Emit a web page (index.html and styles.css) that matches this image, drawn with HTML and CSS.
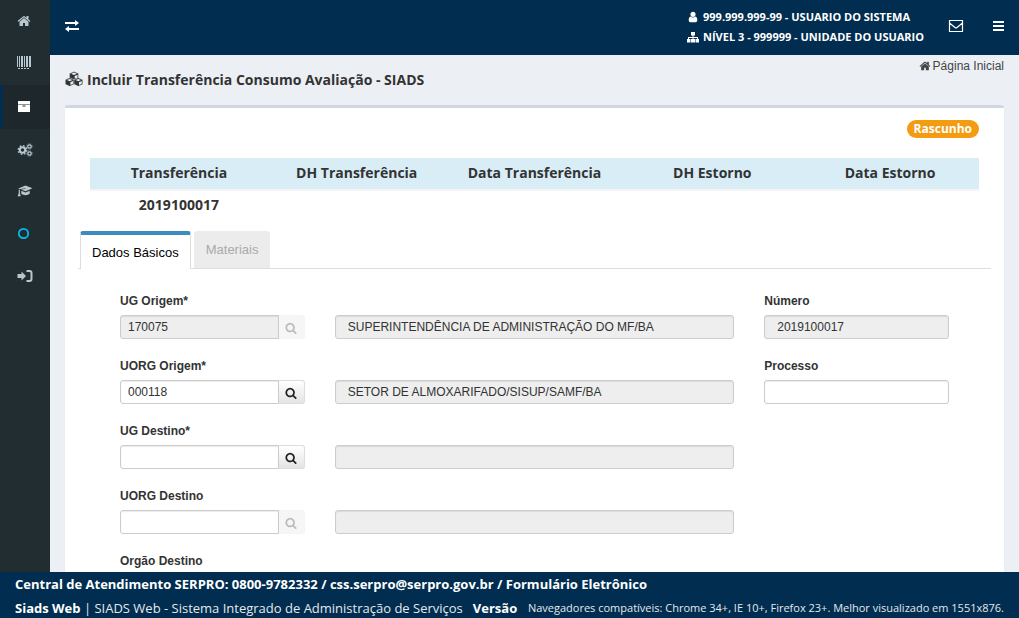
FILE: index.html
```html
<!DOCTYPE html>
<html lang="pt-BR">

<head>
    <meta charset="UTF-8">
    <meta name="viewport" content="width=device-width, initial-scale=1.0">
    <title>Incluir Transferência Consumo Avaliação - SIADS</title>
    <link rel="stylesheet" href="styles.css">
</head>

<body>

    <!-- Shared icons -->
    <svg class="sprite" aria-hidden="true">
        <symbol id="icon-home" viewBox="0 0 1792 1792">
            <path d="M1472 992v480q0 26-19 45t-45 19h-384v-384h-256v384h-384q-26 0-45-19t-19-45v-480q0-1 .5-3t.5-3l575-474 575 474q1 2 1 6zm223-69l-62 74q-8 9-21 11h-3q-13 0-21-7l-692-577-692 577q-12 8-24 7-13-2-21-11l-62-74q-8-10-7-23.5t11-21.5l719-599q32-26 76-26t76 26l244 204v-195q0-14 9-23t23-9h192q14 0 23 9t9 23v408l219 182q10 8 11 21.5t-7 23.5z"/>
        </symbol>
        <symbol id="icon-search" viewBox="0 0 1792 1792">
            <path d="M1216 832q0-185-131.5-316.5t-316.5-131.5-316.5 131.5-131.5 316.5 131.5 316.5 316.5 131.5 316.5-131.5 131.5-316.5zm512 832q0 52-38 90t-90 38q-54 0-90-38l-343-342q-179 124-399 124-143 0-273.5-55.5t-225-150-150-225-55.5-273.5 55.5-273.5 150-225 225-150 273.5-55.5 273.5 55.5 225 150 150 225 55.5 273.5q0 220-124 399l343 343q37 37 37 90z"/>
        </symbol>
    </svg>

    <div class="wrapper">
        <nav class="sidebar" aria-label="Menu principal">
            <a href="#" aria-label="Início"><svg class="icon"><use href="#icon-home"/></svg></a>
            <a href="#" class="tall" aria-label="Patrimônio">
                <svg class="icon" viewBox="0 0 14 14">
                    <path d="M0 0h1v11H0zM2 0h1v11H2zM4 0h2v11H4zM7 0h1v11H7zM9 0h2v11H9zM12 0h2v11h-2zM1 12h2v1H1zM4 12h2v1H4zM7 12h2v1H7zM10 12h2v1h-2z"/>
                </svg>
            </a>
            <a href="#" class="tall active" aria-label="Almoxarifado">
                <svg class="icon" viewBox="0 0 14 14">
                    <path d="M1 1h12v3H1zM1 4.500h12V12H1zM5.500 5.500v1h3v-1z" fill-rule="evenodd"/>
                </svg>
            </a>
            <a href="#" aria-label="Configurações">
                <svg class="icon wide" viewBox="0 0 15 14">
                    <g fill="none" stroke="currentColor">
                        <circle cx="5" cy="7" r="2.700" stroke-width="2"/>
                        <circle cx="5" cy="7" r="4.300" stroke-width="1.300" stroke-dasharray="1.700 1.677"/>
                        <circle cx="12" cy="3.500" r="1.700" stroke-width="1.200"/>
                        <circle cx="12" cy="3.500" r="2.600" stroke-width=".8" stroke-dasharray="1.100 .94"/>
                        <circle cx="12" cy="10.500" r="1.700" stroke-width="1.200"/>
                        <circle cx="12" cy="10.500" r="2.600" stroke-width=".8" stroke-dasharray="1.100 .94"/>
                    </g>
                </svg>
            </a>
            <a href="#" aria-label="Treinamento">
                <svg class="icon wide" viewBox="0 0 15 14">
                    <path d="M8 1.500l7 2.700-7 3-4.500-1.700 4.500-.7-.2-.6-6 1.100-1-.7zM3.800 6.700L8 8.400l4.200-1.700v3c-2 1.900-6.400 1.900-8.400 0zM1.200 5.700l1.200.4v3.200l.9 2.900H.1l1.100-2.900z"/>
                </svg>
            </a>
            <a href="#" class="tall info" aria-label="Ajuda">
                <svg class="icon" viewBox="0 0 14 14">
                    <circle cx="6.500" cy="7.500" r="4.700" fill="none" stroke="currentColor" stroke-width="1.700"/>
                </svg>
            </a>
            <a href="#" aria-label="Sair">
                <svg class="icon wide" viewBox="0 0 15 14">
                    <path d="M0 5h4V2.500L8.500 7 4 11.500V9H0z"/>
                    <path d="M9 2h3q2 0 2 2v6q0 2-2 2H9" fill="none" stroke="currentColor" stroke-width="2"/>
                </svg>
            </a>
        </nav>

        <div class="page">
            <header class="topbar">
                <button type="button" class="icon-button" aria-label="Alternar menu">
                    <svg class="icon wide" viewBox="0 0 16 14">
                        <path d="M1 3h10V1l4 3-4 3V5H1zM15 9H5V7l-4 3 4 3v-2h10z"/>
                    </svg>
                </button>
                <div class="user-info">
                    <div>
                        <svg class="icon-user" viewBox="0 0 1792 1792">
                            <path d="M1536 1399q0 109-62.500 187t-150.500 78h-854q-88 0-150.500-78t-62.500-187q0-85 8.500-160.500t31.500-152 58.500-131 94-89 134.500-34.500q131 128 313 128t313-128q76 0 134.500 34.500t94 89 58.500 131 31.500 152 8.500 160.500zm-256-887q0 159-112.500 271.500t-271.500 112.500-271.500-112.500-112.500-271.500 112.500-271.500 271.500-112.500 271.500 112.500 112.500 271.500z"/>
                        </svg>
                        <span>999.999.999-99 - USUARIO DO SISTEMA</span>
                    </div>
                    <div>
                        <svg class="icon-user" viewBox="0 0 12 12">
                            <path d="M4 1h4v3.500H6.500V6H11v2h1v3.500H8.500V8H10V7H6.500v1H8v3.500H4V8h1.500V7H2v1h1.500v3.500H0V8h1V6h4.500V4.500H4z"/>
                        </svg>
                        <span>NÍVEL 3 - 999999 - UNIDADE DO USUARIO</span>
                    </div>
                </div>
                <button type="button" class="icon-button" aria-label="Mensagens">
                    <svg class="icon wide" viewBox="0 0 16 14">
                        <path d="M1.500 1.500h13v11h-13zM1.500 4L7 8.500q1 .8 2 0L14.500 4" fill="none" stroke="currentColor" stroke-width="1.200" stroke-linejoin="round"/>
                    </svg>
                </button>
                <button type="button" class="icon-button" aria-label="Opções">
                    <svg class="icon-bars" viewBox="0 0 11 10">
                        <path d="M0 0h11v2H0zM0 4h11v2H0zM0 8h11v2H0z"/>
                    </svg>
                </button>
            </header>

            <main class="content">
                <div class="content-header">
                    <h1>
                        <svg class="icon-cubes" viewBox="0 0 18 16">
                            <g fill="currentColor" stroke="#ecf0f5" stroke-width=".4" stroke-linejoin="round">
                                <path d="M9 .5l4.500 2v4.500L9 9 4.500 7V2.500z"/>
                                <path d="M4.700 6.800L9 8.700v4.500l-4.300 2.100-4.400-2.100V8.700z"/>
                                <path d="M13.300 6.800l4.400 1.900v4.500l-4.400 2.100L9 13.200V8.700z"/>
                            </g>
                            <path d="M9 1.600l2.800 1.100L9 3.900 6.200 2.700zM4.700 7.900l2.700 1.100-2.700 1.200L2 9zM13.300 7.900L16 9l-2.700 1.200L10.600 9zM9.700 5l2.800-1.200v2.700L9.700 7.700zM5.400 11.300L8 10.100v2.600l-2.600 1.300zM14 11.300l2.700-1.200v2.600L14 14z" fill="#ecf0f5"/>
                        </svg>
                        Incluir Transferência Consumo Avaliação - SIADS
                    </h1>
                    <a href="#" class="breadcrumb"><svg class="icon-crumb"><use href="#icon-home"/></svg>Página Inicial</a>
                </div>

                <section class="box">
                    <div class="status"><span class="badge">Rascunho</span></div>

                    <table class="summary">
                        <thead>
                            <tr>
                                <th>Transferência</th>
                                <th>DH Transferência</th>
                                <th>Data Transferência</th>
                                <th>DH Estorno</th>
                                <th>Data Estorno</th>
                            </tr>
                        </thead>
                        <tbody>
                            <tr>
                                <td>2019100017</td>
                                <td></td>
                                <td></td>
                                <td></td>
                                <td></td>
                            </tr>
                        </tbody>
                    </table>

                    <div class="tabs" role="tablist">
                        <button type="button" class="tab selected" role="tab" aria-selected="true">Dados Básicos</button>
                        <button type="button" class="tab" role="tab" aria-selected="false" disabled>Materiais</button>
                    </div>

                    <form class="form">
                        <div class="field">
                            <label for="ugOrigem">UG Origem*</label>
                            <div class="lookup">
                                <input type="text" id="ugOrigem" value="170075" readonly>
                                <button type="button" aria-label="Pesquisar UG Origem" disabled><svg><use href="#icon-search"/></svg></button>
                            </div>
                        </div>
                        <div class="field description">
                            <input type="text" aria-label="Descrição UG Origem" value="SUPERINTENDÊNCIA DE ADMINISTRAÇÃO DO MF/BA" readonly>
                        </div>
                        <div class="field">
                            <label for="numero">Número</label>
                            <input type="text" id="numero" value="2019100017" readonly>
                        </div>

                        <div class="field">
                            <label for="uorgOrigem">UORG Origem*</label>
                            <div class="lookup">
                                <input type="text" id="uorgOrigem" value="000118">
                                <button type="button" aria-label="Pesquisar UORG Origem"><svg><use href="#icon-search"/></svg></button>
                            </div>
                        </div>
                        <div class="field description">
                            <input type="text" aria-label="Descrição UORG Origem" value="SETOR DE ALMOXARIFADO/SISUP/SAMF/BA" readonly>
                        </div>
                        <div class="field">
                            <label for="processo">Processo</label>
                            <input type="text" id="processo">
                        </div>

                        <div class="field first">
                            <label for="ugDestino">UG Destino*</label>
                            <div class="lookup">
                                <input type="text" id="ugDestino">
                                <button type="button" aria-label="Pesquisar UG Destino"><svg><use href="#icon-search"/></svg></button>
                            </div>
                        </div>
                        <div class="field description">
                            <input type="text" aria-label="Descrição UG Destino" readonly>
                        </div>

                        <div class="field first">
                            <label for="uorgDestino">UORG Destino</label>
                            <div class="lookup">
                                <input type="text" id="uorgDestino">
                                <button type="button" aria-label="Pesquisar UORG Destino" disabled><svg><use href="#icon-search"/></svg></button>
                            </div>
                        </div>
                        <div class="field description">
                            <input type="text" aria-label="Descrição UORG Destino" readonly>
                        </div>

                        <div class="field first">
                            <label for="orgaoDestino">Orgão Destino</label>
                            <input type="text" id="orgaoDestino">
                        </div>
                    </form>
                </section>
            </main>
        </div>
    </div>

    <footer class="footer">
        <div class="support">Central de Atendimento SERPRO: 0800-9782332 / css.serpro@serpro.gov.br / <a href="#">Formulário Eletrônico</a></div>
        <div class="about">
            <span><b>Siads Web</b> | SIADS Web - Sistema Integrado de Administração de Serviços</span>
            <b class="version">Versão</b>
            <small>Navegadores compatíveis: Chrome 34+, IE 10+, Firefox 23+. Melhor visualizado em 1551x876.</small>
        </div>
    </footer>

</body>

</html>
```

FILE: styles.css
```css
* {
    box-sizing: border-box;
}

body {
    display: flex;
    flex-direction: column;
    height: 100vh;
    margin: 0;
    overflow: hidden;
    font-family: "Open Sans", sans-serif;
    font-size: 14px;
    color: #333;
    background-color: #ecf0f5;
}

a {
    color: inherit;
    text-decoration: none;
}

svg {
    fill: currentColor;
    flex-shrink: 0;
}

.sprite {
    display: none;
}

.icon {
    width: 14px;
    height: 14px;
}

.icon.wide {
    width: 16px;
}

.wrapper {
    display: flex;
    flex: 1;
    min-height: 0;
}

/* Sidebar */
.sidebar {
    width: 50px;
    flex-shrink: 0;
    background-color: #222d32;
    color: #b8c7ce;
}

.sidebar a {
    display: flex;
    align-items: center;
    height: 41px;
    padding-left: 14px;
    border-left: 3px solid transparent;
}

.sidebar a.tall {
    height: 44px;
}

.sidebar a.active {
    color: #fff;
    background-color: #1e282c;
    border-left-color: #002d50;
}

.sidebar a.info {
    color: #00c0ef;
}

.page {
    display: flex;
    flex-direction: column;
    flex: 1;
    min-width: 0;
}

/* Top bar */
.topbar {
    display: flex;
    align-items: center;
    height: 55px;
    flex-shrink: 0;
    padding: 0 15px 4px 14px;
    color: #fff;
    background-color: #002d50;
}

.icon-button {
    display: flex;
    padding: 0;
    border: 0;
    color: inherit;
    background: none;
    cursor: pointer;
}

.icon-button + .icon-button {
    margin-left: 29px;
}

.icon-bars {
    width: 11px;
    height: 10px;
}

.user-info {
    margin-left: auto;
    margin-right: 24px;
    padding-top: 3px;
    font-size: 11px;
    font-weight: 700;
    line-height: 20px;
}

.user-info div {
    display: flex;
    align-items: center;
    gap: 4px;
}

.icon-user {
    width: 12px;
    height: 12px;
}

/* Content */
.content {
    flex: 1;
    min-height: 0;
    overflow: hidden;
    padding: 0 15px;
}

.content-header {
    display: flex;
    justify-content: space-between;
    height: 50px;
}

h1 {
    display: flex;
    align-items: center;
    gap: 4px;
    margin: 0;
    padding-bottom: 2px;
    font-size: 14px;
    font-weight: 700;
}

.icon-cubes {
    width: 18px;
    height: 16px;
}

.breadcrumb {
    display: flex;
    align-items: center;
    gap: 2px;
    height: 22px;
    font-family: "Liberation Sans", Arial, sans-serif;
    font-size: 12px;
    color: #444;
}

.icon-crumb {
    width: 12px;
    height: 12px;
}

.box {
    padding: 12px 13px;
    background-color: #fff;
    border-top: 3px solid #d2d6de;
    border-radius: 3px;
    box-shadow: 0 1px 1px rgba(0, 0, 0, 0.1);
}

.status {
    display: flex;
    justify-content: flex-end;
    height: 38px;
    padding-right: 12px;
}

.badge {
    height: 18px;
    padding: 0 7px;
    border-radius: 9px;
    font-size: 12px;
    font-weight: 700;
    line-height: 18px;
    color: #fff;
    background-color: #f39c12;
}

.summary {
    width: calc(100% - 24px);
    margin: 0 12px 11px;
    border-collapse: collapse;
    table-layout: fixed;
}

.summary th,
.summary td {
    height: 30px;
    padding: 0 0 2px;
    font-weight: 700;
    text-align: center;
}

.summary th {
    height: 32px;
    background-color: #d9edf7;
    border-bottom: 2px solid #f4f4f4;
}

/* Tabs */
.tabs {
    display: flex;
    gap: 3px;
    height: 38px;
    padding-left: 2px;
    border-bottom: 1px solid #ddd;
}

.tab {
    height: 37px;
    padding: 0 12px;
    border: 0;
    border-radius: 3px 3px 0 0;
    font-family: "Liberation Sans", Arial, sans-serif;
    font-size: 13px;
    color: #aaa;
    background-color: #ececec;
}

.tab.selected {
    height: 38px;
    padding: 0 11px;
    border: 1px solid #ddd;
    border-top: 4px solid #3c8dbc;
    border-bottom: 0;
    color: #000;
    background-color: #fff;
}

/* Form */
.form {
    display: grid;
    grid-template-columns: repeat(12, 1fr);
    gap: 18px 30px;
    align-items: end;
    padding: 23px 42px;
    font-family: "Liberation Sans", Arial, sans-serif;
    font-size: 12px;
}

.field {
    grid-column: span 3;
}

.field.first {
    grid-column: 1 / span 3;
}

.field.description {
    grid-column: span 6;
}

.field label {
    display: block;
    margin-bottom: 5px;
    font-weight: 700;
    line-height: 18px;
}

.field input {
    display: block;
    width: 100%;
    height: 24px;
    padding: 0 12px;
    border: 1px solid #ccc;
    border-radius: 3px;
    font: inherit;
    color: #333;
    background-color: #fff;
    box-shadow: inset 0 1px 1px rgba(0, 0, 0, 0.08);
}

.field input[readonly] {
    background-color: #eee;
}

.lookup {
    display: flex;
}

.lookup input {
    flex: 1;
    min-width: 0;
    padding: 0 7px;
    border-radius: 3px 0 0 3px;
}

.lookup button {
    display: flex;
    align-items: center;
    justify-content: center;
    width: 26px;
    padding: 2px 0 0;
    border: 1px solid #ddd;
    border-left: 0;
    border-radius: 0 3px 3px 0;
    color: #222;
    background: linear-gradient(#fff, #e4e4e4);
}

.lookup button:disabled {
    border-color: #f4f4f4;
    color: #bbb;
    background: #f6f6f6;
}

.lookup svg {
    width: 12px;
    height: 12px;
}

/* Footer */
.footer {
    flex-shrink: 0;
    height: 46px;
    padding: 0 15px;
    font-size: 13px;
    line-height: 24px;
    color: #fff;
    background-color: #002d50;
}

.support {
    font-weight: 700;
}

.about {
    display: flex;
    white-space: nowrap;
    color: #e4e9ed;
}

.about b {
    color: #fff;
}

.version {
    margin-left: 10px;
}

.about small {
    margin-left: auto;
    font-size: 11px;
}
```
